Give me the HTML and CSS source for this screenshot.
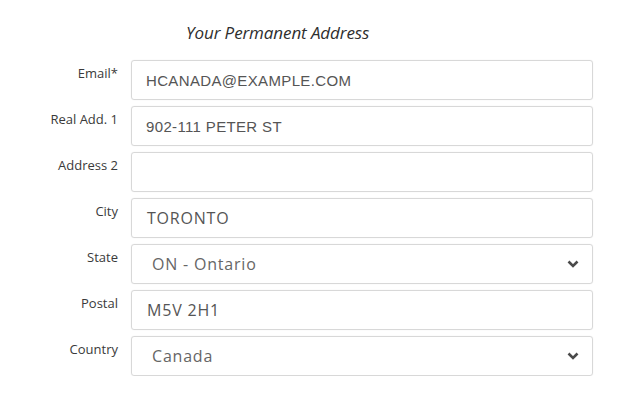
FILE: index.html
```html
<!DOCTYPE html>
<html>
<head>
<meta charset="utf-8">
<link rel="stylesheet" href="styles.css">
</head>
<body>
<div class="panel">
  <h2 class="title">Your Permanent Address</h2>
  <div class="form">
    <label class="lbl">Email*</label>
    <div class="field arial">HCANADA@EXAMPLE.COM</div>
    <label class="lbl">Real Add. 1</label>
    <div class="field arial">902-111 PETER ST</div>
    <label class="lbl">Address 2</label>
    <div class="field"></div>
    <label class="lbl">City</label>
    <div class="field sans">TORONTO</div>
    <label class="lbl">State</label>
    <div class="field select"><span class="val">ON - Ontario</span><svg class="chev" width="12" height="8" viewBox="0 0 12 8"><path d="M1.5 1.5 L6 6 L10.5 1.5" fill="none" stroke="#4a4a4a" stroke-width="2.6"/></svg></div>
    <label class="lbl">Postal</label>
    <div class="field sans">M5V 2H1</div>
    <label class="lbl">Country</label>
    <div class="field select"><span class="val">Canada</span><svg class="chev" width="12" height="8" viewBox="0 0 12 8"><path d="M1.5 1.5 L6 6 L10.5 1.5" fill="none" stroke="#4a4a4a" stroke-width="2.6"/></svg></div>
  </div>
</div>
</body>
</html>
```

FILE: styles.css
```css
html, body {
  margin: 0;
  padding: 0;
  background: #ffffff;
}
.panel {
  padding-top: 21px;
  font-family: "Open Sans", "DejaVu Sans", sans-serif;
}
.title {
  margin: 0 0 0 186px;
  font-size: 17px;
  font-style: italic;
  font-weight: normal;
  color: #2e2e2e;
  letter-spacing: -0.1px;
  line-height: 24px;
  height: 39px;
}
.form {
  display: grid;
  grid-template-columns: 118px 462px;
  column-gap: 13px;
  row-gap: 6px;
}
.lbl {
  text-align: right;
  font-size: 13px;
  line-height: 18px;
  color: #3a3a3a;
  letter-spacing: 0;
  padding-top: 4px;
  white-space: nowrap;
}
.field {
  height: 40px;
  box-sizing: border-box;
  border: 1px solid #d8d8d8;
  border-radius: 3px;
  box-shadow: 0 0 1px rgba(0,0,0,0.12);
  display: flex;
  align-items: center;
  padding-left: 14px;
  color: #555;
}
.arial {
  font-family: "Liberation Sans", Arial, sans-serif;
  font-size: 15px;
  letter-spacing: 0.35px;
}
.sans {
  font-size: 16px;
  letter-spacing: 0.8px;
  padding-left: 15px;
}
.select {
  font-size: 16px;
  letter-spacing: 0.8px;
  padding-left: 20px;
  padding-right: 13px;
  justify-content: space-between;
  color: #666;
}
.chev {
  display: block;
}
```
